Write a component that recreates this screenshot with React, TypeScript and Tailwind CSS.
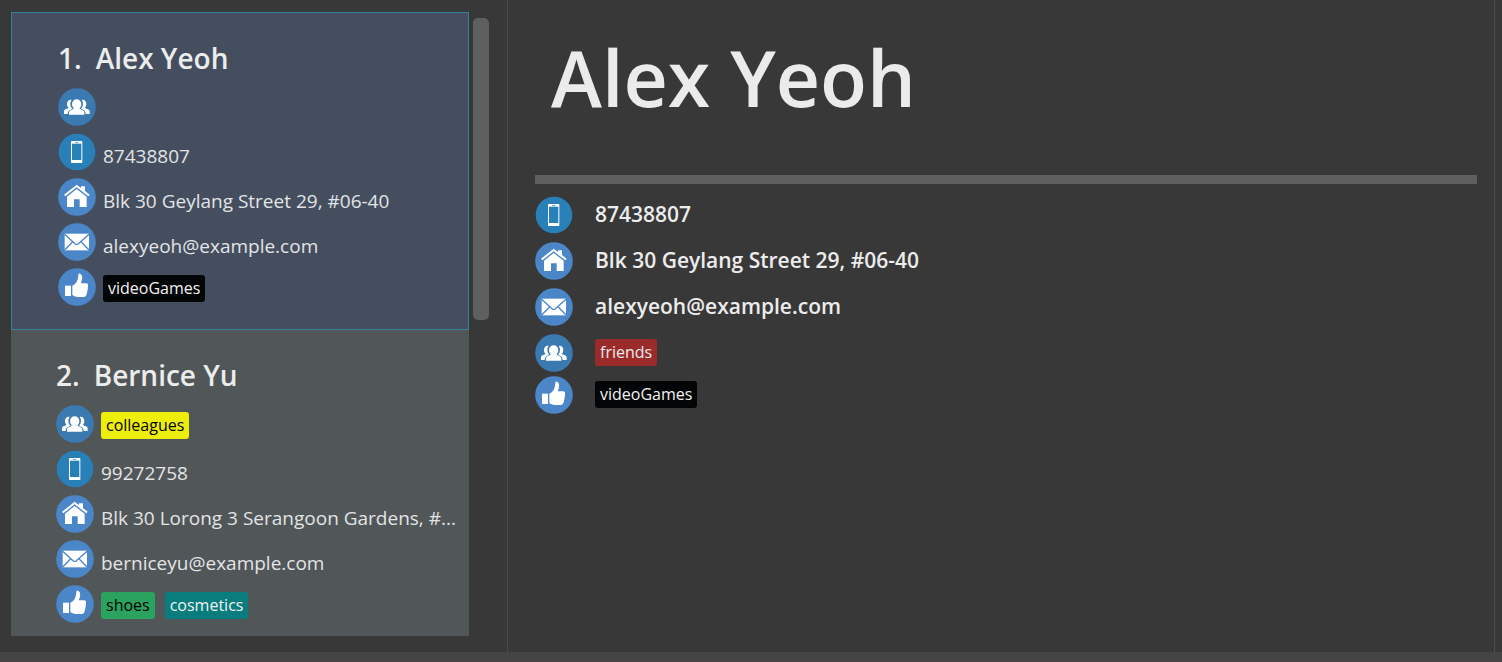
import type { ReactNode } from "react";

type IconName = "group" | "phone" | "home" | "mail" | "like";

const discColors: Record<IconName, string> = {
  group: "#3b79b1",
  phone: "#2980b9",
  home: "#4a86c8",
  mail: "#4a86c8",
  like: "#4a86c8",
};

const glyphs: Record<IconName, ReactNode> = {
  group: (
    <g fill="#fff">
      <path d="M41 36C33 34 27 40 27 48C27 54 29 57 32 60C25 63 18 64 18 70V78H29C29 70 34 65 43 62C36 55 35 43 41 36Z" />
      <path d="M71 36C79 34 85 40 85 48C85 54 83 57 80 60C87 63 95 64 95 70V78H83C83 70 78 65 69 62C76 55 77 43 71 36Z" />
      <ellipse cx="56" cy="49" rx="14" ry="15" />
      <path d="M47 61C45 66 33 66 33 74V80H79V74C79 66 67 66 65 61Z" />
    </g>
  ),
  phone: (
    <>
      <rect x="39" y="24" width="34" height="66" rx="2" fill="#fff" />
      <rect x="42" y="32" width="28" height="49" fill="#2980b9" />
      <rect x="51" y="27" width="10" height="2" fill="#2980b9" />
    </>
  ),
  home: (
    <g fill="#fff">
      <path d="M18 50L56 20L69 30V25H81V39L95 50L91 55L56 28L22 55Z" />
      <path d="M27 56L56 33L86 56V87H65V64H48V87H27Z" />
    </g>
  ),
  mail: (
    <>
      <rect x="20" y="32" width="73" height="50" fill="#fff" />
      <g fill="none" stroke="#4a86c8" strokeWidth="4">
        <path d="M20 34L51 62Q56 66 61 62L93 34" />
        <path d="M20 81L44 56M93 81L69 56" />
      </g>
    </>
  ),
  like: (
    <g fill="#fff">
      <rect x="21" y="53" width="18" height="31" />
      <path d="M43 53C54 48 60 38 61 20Q62 14 68 18C76 25 72 37 68 46H84Q91 46 90 53C90 60 89 66 87 75Q85 87 77 87H58Q48 86 43 81Z" />
    </g>
  ),
};

function Icon({ name }: { name: IconName }) {
  return (
    <svg viewBox="0 0 114 114" className="size-[38px] shrink-0" aria-hidden="true">
      <circle cx="57" cy="57" r={name === "phone" ? 55 : 56.5} fill={discColors[name]} />
      {glyphs[name]}
    </svg>
  );
}

const tagColors: Record<string, string> = {
  friends: "bg-[#9b2a2b] text-[#ececec]",
  colleagues: "bg-[#eeee0c] text-black",
  videoGames: "bg-[#040506] text-[#f2f2f2]",
  shoes: "bg-[#2aa35e] text-black",
  cosmetics: "bg-[#097c7e] text-[#f2f2f2]",
};

function Tags({ names }: { names: string[] }) {
  return (
    <ul className="flex gap-[10px] pb-px">
      {names.map((name) => (
        <li key={name} className={`h-[27px] rounded-[3px] px-[5px] text-[16px] leading-[26px] font-medium ${tagColors[name]}`}>
          {name}
        </li>
      ))}
    </ul>
  );
}

type Person = {
  name: string;
  phone: string;
  address: string;
  email: string;
  groups: string[];
  likes: string[];
};

const people: Person[] = [
  {
    name: "Alex Yeoh",
    phone: "87438807",
    address: "Blk 30 Geylang Street 29, #06-40",
    email: "alexyeoh@example.com",
    groups: [],
    likes: ["videoGames"],
  },
  {
    name: "Bernice Yu",
    phone: "99272758",
    address: "Blk 30 Lorong 3 Serangoon Gardens, #...",
    email: "berniceyu@example.com",
    groups: ["colleagues"],
    likes: ["shoes", "cosmetics"],
  },
];

function CardRow({ icon, children }: { icon: IconName; children: ReactNode }) {
  return (
    <div className="flex h-[45px] items-start gap-[7px]">
      <Icon name={icon} />
      {children}
    </div>
  );
}

function CardText({ children }: { children: ReactNode }) {
  return <p className="min-w-0 text-[19px] leading-[46px] whitespace-nowrap text-[#e2e4e6]">{children}</p>;
}

function PersonCard({ person, index, selected }: { person: Person; index: number; selected: boolean }) {
  return (
    <li
      className={`shrink-0 pt-[23px] pr-[10px] pb-4 ${
        selected ? "border border-[#35809a] bg-[#444e5f] pl-[46px]" : "bg-[#515658] pl-[45px]"
      }`}
    >
      <h2 className="mb-2 flex gap-[14px] text-[28px] leading-[44px] font-semibold text-[#ececec]">
        <span>{index}.</span>
        <span>{person.name}</span>
      </h2>
      <CardRow icon="group">
        <div className="pt-[7px]">
          <Tags names={person.groups} />
        </div>
      </CardRow>
      <CardRow icon="phone">
        <CardText>{person.phone}</CardText>
      </CardRow>
      <CardRow icon="home">
        <CardText>{person.address}</CardText>
      </CardRow>
      <CardRow icon="mail">
        <CardText>{person.email}</CardText>
      </CardRow>
      <CardRow icon="like">
        <div className="pt-[7px]">
          <Tags names={person.likes} />
        </div>
      </CardRow>
    </li>
  );
}

function DetailRow({ icon, children }: { icon: IconName; children: ReactNode }) {
  return (
    <div className="flex h-[38px] items-center gap-[22px] text-[21px] font-semibold text-[#ececec]">
      <Icon name={icon} />
      {children}
    </div>
  );
}

export default function App() {
  const current = people[0];
  return (
    <div className="flex h-screen flex-col bg-[#383838] font-['Open_Sans','Noto_Sans',sans-serif]">
      <div className="flex min-h-0 flex-1">
        <aside className="flex w-[508px] shrink-0 gap-1 border-r border-[#4a4a4a] pt-3 pr-[18px] pb-4 pl-[11px]">
          <ul className="flex min-w-0 flex-1 flex-col overflow-hidden">
            {people.map((person, i) => (
              <PersonCard key={person.name} person={person} index={i + 1} selected={i === 0} />
            ))}
          </ul>
          <div className="w-4 pt-[6px]">
            <div className="h-[302px] rounded-[5px] bg-[#5f5f5f]" />
          </div>
        </aside>
        <main className="mr-[7px] min-w-0 flex-1 border-r border-[#4d4d4d] pr-[17px] pl-[27px]">
          <h1 className="px-4 pt-[18px] pb-[37px] text-[77px] leading-[120px] font-semibold text-[#ebebeb]">{current.name}</h1>
          <div className="h-[9px] bg-[#5f5f5f]" />
          <div className="mt-3 flex flex-col gap-2">
            <DetailRow icon="phone">{current.phone}</DetailRow>
            <DetailRow icon="home">{current.address}</DetailRow>
            <DetailRow icon="mail">{current.email}</DetailRow>
          </div>
          <div className="mt-2 flex flex-col gap-1">
            <DetailRow icon="group">
              <Tags names={["friends"]} />
            </DetailRow>
            <DetailRow icon="like">
              <Tags names={current.likes} />
            </DetailRow>
          </div>
        </main>
      </div>
      <footer className="h-[10px] shrink-0 border-b border-[#4e4348] bg-[#444444]" />
    </div>
  );
}
